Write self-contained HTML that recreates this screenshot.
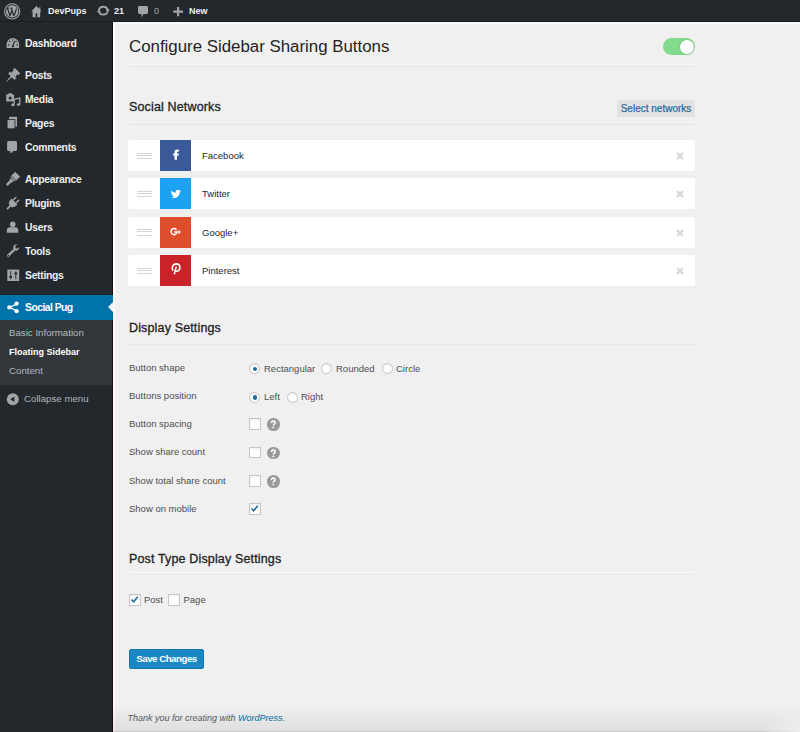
<!DOCTYPE html>
<html><head><meta charset="utf-8">
<style>
*{margin:0;padding:0;box-sizing:border-box}
html,body{width:800px;height:732px;overflow:hidden;background:#f1f1f1;font-family:"Liberation Sans",sans-serif}
.a{position:absolute;white-space:nowrap}
#bar{position:absolute;left:0;top:0;width:800px;height:22px;background:#23282d}
#side{position:absolute;left:0;top:22px;width:113px;height:710px;background:#23282d}
#content{position:absolute;left:113px;top:22px;width:687px;height:710px;background:#f0f0f0;border-top:2px solid #fafafa;border-left:2px solid #fafafa}
.bt{color:#eee;font-size:9px;font-weight:bold;line-height:10px}
.mi{color:#eee;font-size:10.4px;font-weight:bold;line-height:12px;letter-spacing:-0.3px}
.ic{position:absolute}
.h2{color:#222;font-size:12.5px;line-height:14px;letter-spacing:0.15px;-webkit-text-stroke:0.3px #222}
.hr{position:absolute;left:129px;width:566px;height:1px;background:#e7e7e7;box-shadow:0 -2px 0 #f5f5f5}
.row{position:absolute;left:128px;width:567px;height:31px;background:#fff;border-radius:2px}
.sq{position:absolute;left:32px;top:0;width:31px;height:31px}
.dh{position:absolute;left:9.2px;top:12.8px;width:15px;height:6.2px;border-top:1px solid #d4d4d4;border-bottom:1px solid #d4d4d4}
.dh:after{content:"";position:absolute;left:0;top:1.1px;width:15px;height:1px;background:#d4d4d4}
.nm{position:absolute;left:74px;top:10px;font-size:9.5px;line-height:12px;color:#23282d}
.x{position:absolute;left:548px;top:12px;width:8px;height:8px}
.lb{color:#4f4f4f;font-size:9.5px;line-height:12px}
.rad{position:absolute;width:11.2px;height:11.2px;border-radius:50%;border:1px solid #c4c4c4;background:#fff;box-shadow:inset 0 1px 2px rgba(0,0,0,.07)}
.rad.on:after{content:"";position:absolute;left:2.5px;top:2.5px;width:4.2px;height:4.2px;border-radius:50%;background:#1b6c9c}
.cb{position:absolute;width:11.6px;height:11.6px;border:1px solid #c6c6c6;background:#fff;box-shadow:inset 0 1px 2px rgba(0,0,0,.07)}
.q{position:absolute;width:12.6px;height:12.6px;border-radius:50%;background:#999;color:#fff;font-size:10px;font-weight:bold;text-align:center;line-height:12.6px}
</style></head><body>
<div id="bar">
  <svg class="ic" style="left:0;top:0" width="220" height="22" viewBox="0 0 220 22">
    <circle cx="12.2" cy="11.4" r="7.6" fill="none" stroke="#a0a5aa" stroke-width="1.1"/>
    <circle cx="12.2" cy="11.4" r="6.2" fill="#a0a5aa"/>
    <path d="M7.4 7.9 L10 15.9 M10.2 15.6 L12.2 9.6 M11.2 7.9 L13.9 15.9 M14.1 15.6 L16.5 8.6" stroke="#23282d" stroke-width="1.25" fill="none"/>
    <path d="M6.6 8.1 H9.4 M10.4 8.1 H12.8" stroke="#23282d" stroke-width="0.8"/>
    <path d="M36.4 6 L31.2 11.4 L32.6 11.4 L32.6 17.2 L40.2 17.2 L40.2 11.4 L41.6 11.4 L40.4 10.2 L40.4 7.3 L39.2 7.3 L39.2 9 Z" fill="#a0a5aa"/>
    <rect x="35.6" y="13.3" width="1.7" height="3.9" fill="#23282d"/>
    <path d="M98.8 10.3 A4.6 4.4 0 0 1 107.8 10.3" fill="none" stroke="#a0a5aa" stroke-width="1.9"/>
    <path d="M107.8 11.1 A4.6 4.4 0 0 1 98.8 11.1" fill="none" stroke="#a0a5aa" stroke-width="1.9"/>
    <path d="M105.6 9.4 L109.9 9.4 L107.8 12 Z M96.7 12 L101 12 L98.8 9.4 Z" fill="#a0a5aa"/>
    <path d="M139.5 6 H146.6 Q148 6 148 7.4 V12.6 Q148 14 146.6 14 H143.6 L141.4 17.3 L141.4 14 H139.5 Q138 14 138 12.6 V7.4 Q138 6 139.5 6 Z" fill="#a0a5aa"/>
    <path d="M178.1 6.9 V16.3 M173.2 11.6 H183" stroke="#a0a5aa" stroke-width="2.2"/>
  </svg>
  <div class="a bt" style="left:48px;top:6px">DevPups</div>
  <div class="a bt" style="left:114px;top:6px">21</div>
  <div class="a bt" style="left:154px;top:6px;color:#9ea3a8;font-weight:normal">0</div>
  <div class="a bt" style="left:189px;top:6px">New</div>
</div>
<div id="side">
<svg class="ic" style="left:0;top:-22px;z-index:2" width="113" height="430" viewBox="0 0 113 430">
 <path d="M6.5 47.2 V44.6 A6.35 6.6 0 0 1 19.2 44.6 V47.2 Q19.2 48.1 18.3 48.1 H7.4 Q6.5 48.1 6.5 47.2 Z" fill="#a0a5aa"/>
 <g fill="#23282d"><circle cx="8.6" cy="45" r=".75"/><circle cx="9.7" cy="41.5" r=".75"/><circle cx="12.85" cy="40.1" r=".75"/><circle cx="16" cy="41.5" r=".75"/><circle cx="17.1" cy="45" r=".75"/><circle cx="12.85" cy="46.3" r="1.1"/></g>
 <path d="M12.6 46.3 L14.6 41.3" stroke="#23282d" stroke-width="1.1"/>
 <g transform="translate(11.6 76.4) rotate(45) scale(1.3)" fill="#a0a5aa"><rect x="-3" y="-6.4" width="6" height="2" rx=".4"/><path d="M-2 -4.6 H2 L2.4 -1.4 H-2.4 Z"/><path d="M-3.8 -1.6 H3.8 L3.2 0.4 H-3.2 Z"/><path d="M-0.7 0 H0.7 L0.15 5.8 H-0.15 Z"/></g>
 <path d="M6.2 94.6 H8 L8.8 93.2 H11.6 L12.4 94.6 H14 V101.4 H6.2 Z" fill="#a0a5aa"/><circle cx="10.1" cy="97.9" r="1.5" fill="#23282d"/>
 <path d="M14.2 99.4 L19.8 98 V104.4" fill="none" stroke="#a0a5aa" stroke-width="1.3"/><path d="M14.2 99 V104.6" stroke="#a0a5aa" stroke-width="1.3"/>
 <ellipse cx="12.9" cy="104.9" rx="1.7" ry="1.4" fill="#a0a5aa"/><ellipse cx="18.5" cy="104.6" rx="1.7" ry="1.4" fill="#a0a5aa"/>
 <rect x="9.2" y="116.8" width="7.8" height="9.9" fill="#a0a5aa"/><rect x="7.1" y="119.6" width="7.9" height="9.2" fill="#a0a5aa" stroke="#23282d" stroke-width=".8"/>
 <path d="M8.6 141.1 H15.5 Q17 141.1 17 142.6 V149.5 Q17 151 15.5 151 H13.3 L11 153.4 L9.9 151 H8.6 Q7.1 151 7.1 149.5 V142.6 Q7.1 141.1 8.6 141.1 Z" fill="#a0a5aa"/>
 <g transform="translate(12.3 179.6) rotate(45) scale(0.97)" fill="#a0a5aa"><path d="M-3.6 -8 Q-1.8 -7.3 0 -8 Q1.8 -7.3 3.6 -8 V-2.2 H-3.6 Z"/><rect x="-3.1" y="-1.7" width="6.2" height="1.5"/><path d="M-1.9 0.2 H1.9 V2.2 L1.3 3 H-1.3 L-1.9 2.2 Z"/><rect x="-1.3" y="2.4" width="2.6" height="6" rx="1.3"/></g>
 <g transform="translate(12.4 203.7) rotate(45) scale(1.0)" fill="#a0a5aa"><rect x="-2.8" y="-7.6" width="1.6" height="4.4" rx=".8"/><rect x="1.2" y="-7.6" width="1.6" height="4.4" rx=".8"/><path d="M-4.2 -3 H4.2 Q4.2 2.8 1 3.2 H-1 Q-4.2 2.8 -4.2 -3 Z"/><rect x="-0.8" y="3" width="1.6" height="4.6"/></g>
 <circle cx="12.75" cy="224.2" r="2.8" fill="#a0a5aa"/><path d="M6.8 232.7 V230.6 Q6.8 227.2 10.3 227.2 H15.2 Q18.3 227.2 18.3 230.6 V232.7 Z" fill="#a0a5aa"/>
 <path d="M16.6 244.2 Q13.6 244.2 13.2 247.2 Q13.1 248.2 13.5 248.9 L7.4 254.6 Q6.6 255.6 7.4 256.4 Q8.3 257.3 9.2 256.4 L15 250.5 Q15.9 250.9 17 250.7 Q19.4 250 19.4 247 L17.7 248.6 L15.7 248.2 L15.3 246.3 L17.2 244.3 Z" fill="#a0a5aa"/><circle cx="8.4" cy="255.4" r=".65" fill="#23282d"/>
 <rect x="7.3" y="269.6" width="11.9" height="11.4" fill="#a0a5aa"/>
 <path d="M10.7 271.2 V279.4 M15.8 271.2 V279.4" stroke="#23282d" stroke-width=".9"/><rect x="9.3" y="276" width="2.8" height="1.8" fill="#23282d"/><rect x="14.4" y="272.6" width="2.8" height="1.8" fill="#23282d"/>
 <path d="M17 303.8 L9.6 307.4 L17 311" fill="none" stroke="#fff" stroke-width="1.3"/><circle cx="16.6" cy="303.6" r="2.1" fill="#fff"/><circle cx="9.3" cy="307.4" r="2.1" fill="#fff"/><circle cx="16.6" cy="311.2" r="2.1" fill="#fff"/>
 <circle cx="12.8" cy="399.2" r="6" fill="#a0a5aa"/><path d="M10.2 399.2 L14.4 396.4 V402 Z" fill="#23282d"/>
</svg>

  <div class="a mi" style="left:25px;top:16px">Dashboard</div>
  <div class="a mi" style="left:25px;top:48px">Posts</div>
  <div class="a mi" style="left:25px;top:72px">Media</div>
  <div class="a mi" style="left:25px;top:96px">Pages</div>
  <div class="a mi" style="left:25px;top:120px">Comments</div>
  <div class="a mi" style="left:25px;top:152px">Appearance</div>
  <div class="a mi" style="left:25px;top:176px">Plugins</div>
  <div class="a mi" style="left:25px;top:200px">Users</div>
  <div class="a mi" style="left:25px;top:224px">Tools</div>
  <div class="a mi" style="left:25px;top:248px">Settings</div>
<div style="position:absolute;left:0;top:273px;width:113px;height:25px;background:#0073aa"></div>
    <div class="a mi" style="left:25px;top:280px;color:#fff;letter-spacing:-0.55px">Social Pug</div>
  
  <div style="position:absolute;left:0;top:298px;width:113px;height:65px;background:#32373c"></div>
  <div class="a" style="left:9px;top:305px;font-size:9.7px;line-height:12px;color:#b4b9be">Basic Information</div>
  <div class="a" style="left:9px;top:324px;font-size:9px;line-height:12px;color:#fff;font-weight:bold">Floating Sidebar</div>
  <div class="a" style="left:9px;top:343px;font-size:9.7px;line-height:12px;color:#b4b9be">Content</div>
  <div class="a" style="left:24px;top:371px;font-size:9.7px;line-height:12px;color:#afb4b9">Collapse menu</div>
</div>
<div id="content"></div>
<div style="position:absolute;left:112px;top:22px;width:1px;height:273px;background:#120c0e"></div><div style="position:absolute;left:112px;top:320px;width:1px;height:412px;background:#1c0a0c"></div>
<div style="position:absolute;left:0;top:21px;width:800px;height:1px;background:#1b1e21"></div>
<div class="a" style="left:129px;top:37px;font-size:16.85px;line-height:20px;color:#1f1f1f">Configure Sidebar Sharing Buttons</div>
<!-- toggle -->
<div style="position:absolute;left:663px;top:38.2px;width:32px;height:17px;border-radius:9px;background:#82da8c"></div>
<div style="position:absolute;left:679.8px;top:39.8px;width:13.8px;height:13.8px;border-radius:50%;background:#fff;box-shadow:0 0 0 0.6px #6fc47b"></div>
<div class="hr" style="top:66px"></div>
<div class="a h2" style="left:129px;top:100px">Social Networks</div>
<div class="a" style="left:617px;top:100px;width:78px;height:17px;background:#e2e2e2;color:#2567a0;-webkit-text-stroke:0.2px #2567a0;font-size:10px;line-height:17px;text-align:center">Select networks</div>
<div class="hr" style="top:124px"></div>
<div class="row" style="top:140px"><div class="dh"></div><div class="sq" style="background:#3a5998"><svg width="16" height="16" viewBox="0 0 16 16" style="position:absolute;left:7.5px;top:7.5px"><path d="M6.5 11.8 V7.5 H5.1 V5.5 H6.5 V4.4 Q6.5 1.6 9.3 1.6 Q10.3 1.6 11 1.75 V3.6 H10.1 Q9 3.6 9 4.6 V5.5 H10.9 L10.6 7.5 H9 V11.8 Z" fill="#fff"/></svg></div><div class="nm">Facebook</div><svg class="x" viewBox="0 0 8 8"><path d="M1 1 L7 7 M7 1 L1 7" stroke="#d6d6d6" stroke-width="2"/></svg></div>
<div class="row" style="top:178.3px"><div class="dh"></div><div class="sq" style="background:#1da1f2"><svg width="16" height="16" viewBox="0 0 16 16" style="position:absolute;left:7.5px;top:7.5px"><g transform="translate(-1.3 -0.2) scale(1.04)"><path d="M4 11 Q7.5 12.8 10.5 10.5 Q12.6 8.8 12.7 6 L13.7 5 L12.7 5.2 L13.5 4.2 L12.3 4.6 Q11 3.3 9.4 4.2 Q8.3 5 8.6 6.7 Q6.3 6.6 4.5 4.7 Q3.8 6.4 5.2 7.5 L4.5 7.4 Q4.8 8.9 6.1 9.2 L5.3 9.3 Q5.8 10.3 7 10.5 Q5.7 11.3 4 11Z" fill="#fff"/></g></svg></div><div class="nm">Twitter</div><svg class="x" viewBox="0 0 8 8"><path d="M1 1 L7 7 M7 1 L1 7" stroke="#d6d6d6" stroke-width="2"/></svg></div>
<div class="row" style="top:216.6px"><div class="dh"></div><div class="sq" style="background:#df4e2c"><svg width="16" height="16" viewBox="0 0 16 16" style="position:absolute;left:7.5px;top:7.5px"><path d="M8.5 5.7 A3.05 3.05 0 1 0 9.1 8 H6.2" fill="none" stroke="#fff" stroke-width="1.5"/><path d="M11.1 6.3 V9.7 M9.4 8 H12.8" stroke="#fff" stroke-width="1.2"/></svg></div><div class="nm">Google+</div><svg class="x" viewBox="0 0 8 8"><path d="M1 1 L7 7 M7 1 L1 7" stroke="#d6d6d6" stroke-width="2"/></svg></div>
<div class="row" style="top:254.9px"><div class="dh"></div><div class="sq" style="background:#c92228"><svg width="16" height="16" viewBox="0 0 16 16" style="position:absolute;left:7.5px;top:7.5px"><path d="M5.4 8.7 Q4 7.7 4.3 5.6 Q4.9 2 8.4 1.9 Q11.9 2 11.8 5.5 Q11.6 9.2 8.7 9.3 Q7.6 9.3 7.2 8.5" fill="none" stroke="#fff" stroke-width="1.6"/><path d="M8.3 4.6 L6.3 12.2" stroke="#fff" stroke-width="1.6"/></svg></div><div class="nm">Pinterest</div><svg class="x" viewBox="0 0 8 8"><path d="M1 1 L7 7 M7 1 L1 7" stroke="#d6d6d6" stroke-width="2"/></svg></div>
<div class="a h2" style="left:129px;top:321px">Display Settings</div>
<div class="hr" style="top:344px"></div>
<div class="a lb" style="left:129px;top:362px">Button shape</div>
<div class="rad on" style="left:249.2px;top:363.3px"></div><div class="a lb" style="left:264px;top:363px">Rectangular</div>
<div class="rad" style="left:321.2px;top:363.3px"></div><div class="a lb" style="left:336px;top:363px">Rounded</div>
<div class="rad" style="left:381.5px;top:363.3px"></div><div class="a lb" style="left:396px;top:363px">Circle</div>
<div class="a lb" style="left:129px;top:390px">Buttons position</div>
<div class="rad on" style="left:249.2px;top:391.9px"></div><div class="a lb" style="left:264px;top:391px">Left</div>
<div class="rad" style="left:286.8px;top:391.9px"></div><div class="a lb" style="left:301px;top:391px">Right</div>
<div class="a lb" style="left:129px;top:418px">Button spacing</div>
<div class="cb" style="left:249.2px;top:418.3px"></div><div class="q" style="left:267px;top:418.3px"><svg width="12.6" height="12.6" viewBox="0 0 12.6 12.6" style="position:absolute;left:0;top:0"><path d="M4.6 5 Q4.6 3.1 6.3 3.1 Q8.1 3.1 8.1 4.8 Q8.1 5.7 7.1 6.2 Q6.3 6.7 6.3 7.6" fill="none" stroke="#fff" stroke-width="1.55"/><circle cx="6.3" cy="9.4" r=".9" fill="#fff"/></svg></div>
<div class="a lb" style="left:129px;top:446px">Show share count</div>
<div class="cb" style="left:249.2px;top:446.8px"></div><div class="q" style="left:267px;top:446.8px"><svg width="12.6" height="12.6" viewBox="0 0 12.6 12.6" style="position:absolute;left:0;top:0"><path d="M4.6 5 Q4.6 3.1 6.3 3.1 Q8.1 3.1 8.1 4.8 Q8.1 5.7 7.1 6.2 Q6.3 6.7 6.3 7.6" fill="none" stroke="#fff" stroke-width="1.55"/><circle cx="6.3" cy="9.4" r=".9" fill="#fff"/></svg></div>
<div class="a lb" style="left:129px;top:475px">Show total share count</div>
<div class="cb" style="left:249.2px;top:475.1px"></div><div class="q" style="left:267px;top:475.1px"><svg width="12.6" height="12.6" viewBox="0 0 12.6 12.6" style="position:absolute;left:0;top:0"><path d="M4.6 5 Q4.6 3.1 6.3 3.1 Q8.1 3.1 8.1 4.8 Q8.1 5.7 7.1 6.2 Q6.3 6.7 6.3 7.6" fill="none" stroke="#fff" stroke-width="1.55"/><circle cx="6.3" cy="9.4" r=".9" fill="#fff"/></svg></div>
<div class="a lb" style="left:129px;top:503px">Show on mobile</div>
<div class="cb" style="left:249.2px;top:503.3px"><svg width="11" height="11" viewBox="0 0 11 11" style="position:absolute;left:-1px;top:-1px"><path d="M2.5 5.5 L4.6 7.8 L8.8 2.8" fill="none" stroke="#1f6a9a" stroke-width="1.6"/></svg></div>
<div class="a h2" style="left:129px;top:552px">Post Type Display Settings</div>
<div class="hr" style="top:574px;background:#eaeaea"></div>
<div class="cb" style="left:129px;top:594.2px"><svg width="11" height="11" viewBox="0 0 11 11" style="position:absolute;left:-1px;top:-1px"><path d="M2.5 5.5 L4.6 7.8 L8.8 2.8" fill="none" stroke="#1f6a9a" stroke-width="1.6"/></svg></div>
<div class="a lb" style="left:144px;top:594px">Post</div>
<div class="cb" style="left:168.4px;top:594.2px"></div>
<div class="a lb" style="left:183.5px;top:594px">Page</div>
<div class="a" style="left:129px;top:648.5px;width:75px;height:20px;background:#1b87c3;border-radius:2px;border:1px solid #1477b0;color:#fff;font-size:9.8px;letter-spacing:-0.55px;font-weight:bold;line-height:18px;text-align:center">Save Changes</div>
<div class="a" style="left:127.5px;top:712px;font-size:9px;line-height:12px;color:#555d66;font-style:italic">Thank you for creating with <span style="color:#0073aa">WordPress</span>.</div>
<div style="position:absolute;left:113px;top:708px;width:687px;height:24px;background:linear-gradient(to bottom,rgba(0,0,0,0),rgba(0,0,0,.02) 15%,rgba(0,0,0,.045) 45%,rgba(0,0,0,.065) 92%,rgba(0,0,0,.16))"></div>
<div style="position:absolute;left:107.6px;top:301.5px;width:0;height:0;border-top:5.8px solid transparent;border-bottom:5.8px solid transparent;border-right:5.6px solid #f3f3f3;z-index:5"></div>
<div style="position:absolute;left:760px;top:700px;width:40px;height:32px;background:radial-gradient(ellipse 40px 32px at 100% 100%,rgba(241,241,241,.8),rgba(241,241,241,.45) 50%,rgba(241,241,241,0) 100%)"></div>
</body></html>
